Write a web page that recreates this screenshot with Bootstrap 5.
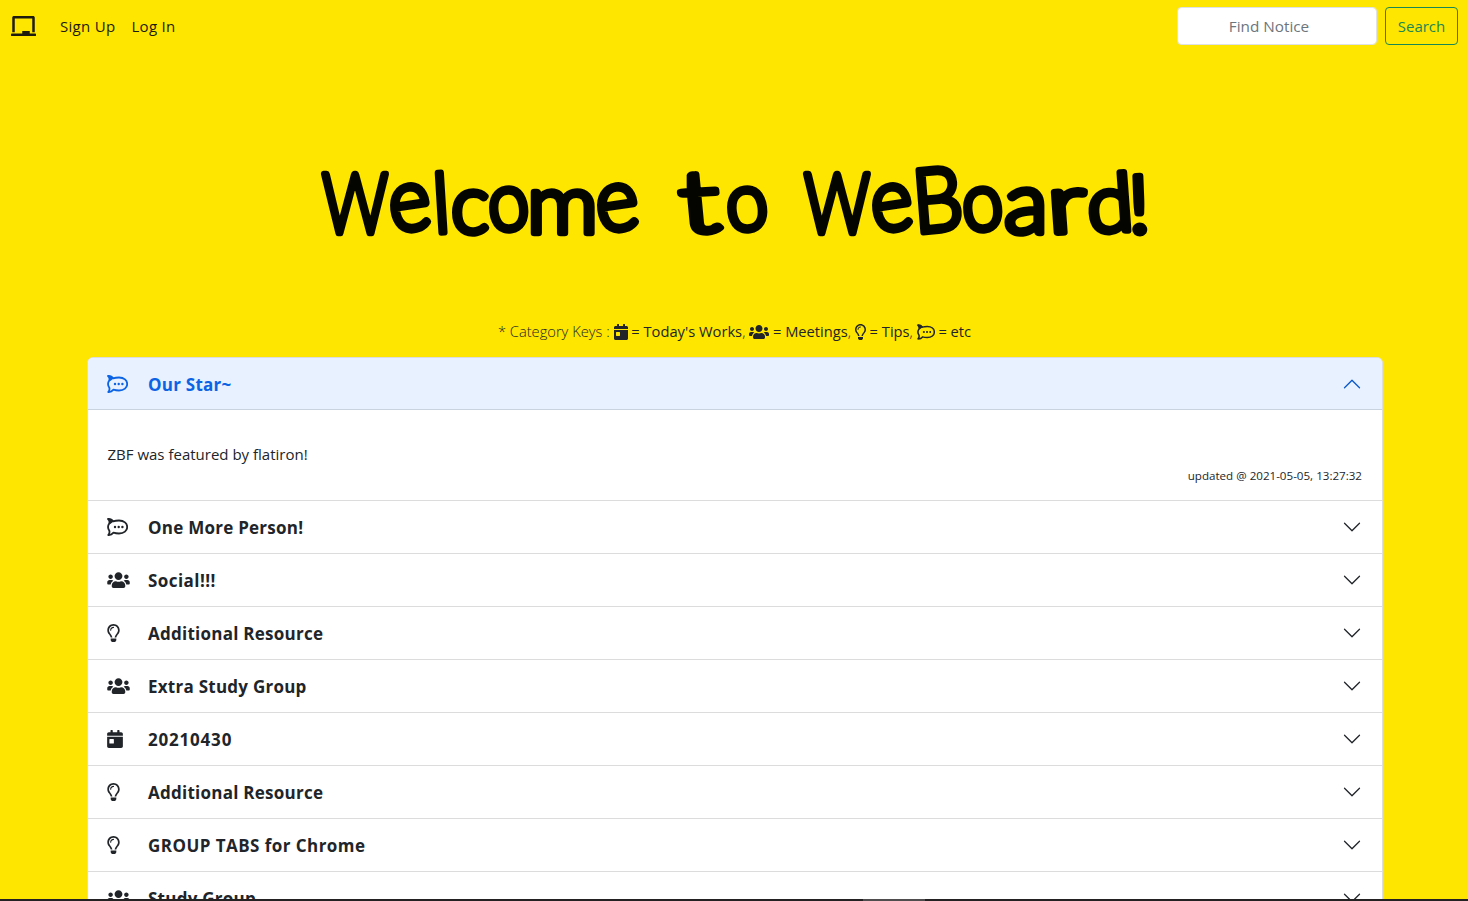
<!DOCTYPE html>
<html lang="en">
<head>
<meta charset="utf-8">
<meta name="viewport" content="width=device-width, initial-scale=1">
<title>WeBoard</title>
<link href="https://cdn.jsdelivr.net/npm/bootstrap@5.3.0/dist/css/bootstrap.min.css" rel="stylesheet">
<style>
html, body { height: 901px; overflow: hidden; }
body { background: #ffe600; font-family: "Open Sans", "Noto Sans", sans-serif; font-size: 15px; color: #212529; }
.topbar { height: 52px; padding: 0 10px 0 11px; }
.topbar a { color: #1c1b0e; text-decoration: none; }
.topbar .menu-link { font-size: 15px; letter-spacing: .300px; margin-left: 16px; }
.topbar .menu-link:nth-child(2) { margin-left: 24px; }
.topbar .form-control { width: 200px; height: 38px; font-size: 15.300px; border-radius: 4px; padding: 6px 14px 6px 12px; }
.topbar .form-control::placeholder { color: #6c757d; }
.topbar .btn { width: 73px; height: 38px; font-size: 15px; padding: 0; border-radius: 4px; }
.hero { height: 268px; }
.hero text { font-family: Lato, "Open Sans", sans-serif; font-weight: 300; font-size: 82px; fill: #050500; stroke: #050500; stroke-width: 6.500px; stroke-linejoin: round; stroke-linecap: round; }
.legend-line { height: 24px; padding-left: 1px; font-size: 14.700px; font-weight: 300; white-space: nowrap; line-height: 22px; }
.legend-line span { white-space: pre; margin-top: -2px; }
.legend-line svg { margin-top: -1px; }
.legend-line b { font-weight: 400; }
.board { width: 1296px; margin: 13px 0 0 87px; }
.board .accordion-item { border-color: #dcdcdd; }
.board .accordion-button { height: 52px; padding: 2px 20px 0; font-size: 17px; font-weight: 700; letter-spacing: .250px; color: #212529; background-color: #fff; }
.board .accordion-button.loose { letter-spacing: .450px; }
.board .accordion-button.looser { letter-spacing: .800px; }
.board .accordion-button::after { margin-top: -2px; }
.board .accordion-button:not(.collapsed) { color: #0c63e4; background-color: #e7f1ff; box-shadow: inset 0 -1px 0 #c9d3e0; }
.board .mark-slot { width: 41px; display: flex; margin: -3px 0 0 -1px; }
.board .accordion-body { height: 90px; padding: 33px 20px 0 19.500px; }
.stamp { font-size: 11.600px; line-height: 19px; }
.taskbar { height: 2px; background: #242122; z-index: 5; }
.taskbar div { width: 62px; height: 2px; margin-left: 863px; background: #504d4e; }
svg { display: block; }
</style>
</head>
<body>
<svg width="0" height="0" class="position-absolute">
  <symbol id="board" viewBox="0 0 640 512"><path d="M96 64h448v352h64V40c0-22.060-17.940-40-40-40H72C49.940 0 32 17.940 32 40v376h64V64zm528 384H480v-64H288v64H16c-8.840 0-16 7.160-16 16v32c0 8.840 7.160 16 16 16h608c8.840 0 16-7.160 16-16v-32c0-8.840-7.160-16-16-16z"/></symbol>
  <symbol id="day" viewBox="0 0 448 512"><path d="M0 464c0 26.500 21.500 48 48 48h352c26.500 0 48-21.500 48-48V192H0v272zm64-192c0-8.800 7.200-16 16-16h96c8.800 0 16 7.200 16 16v96c0 8.800-7.200 16-16 16H80c-8.800 0-16-7.200-16-16v-96zM400 64h-48V16c0-8.800-7.200-16-16-16h-32c-8.800 0-16 7.200-16 16v48H160V16c0-8.800-7.200-16-16-16h-32c-8.800 0-16 7.200-16 16v48H48C21.500 64 0 85.500 0 112v48h448v-48c0-26.500-21.500-48-48-48z"/></symbol>
  <symbol id="users" viewBox="0 0 640 512"><path d="M96 224c35.300 0 64-28.700 64-64s-28.700-64-64-64-64 28.700-64 64 28.700 64 64 64zm448 0c35.300 0 64-28.700 64-64s-28.700-64-64-64-64 28.700-64 64 28.700 64 64 64zm32 32h-64c-17.600 0-33.500 7.100-45.100 18.600 40.300 22.100 68.900 62 75.100 109.400h66c17.700 0 32-14.300 32-32v-32c0-35.300-28.700-64-64-64zm-256 0c61.900 0 112-50.100 112-112S381.900 32 320 32 208 82.100 208 144s50.100 112 112 112zm76.800 32h-8.300c-20.800 10-43.900 16-68.500 16s-47.600-6-68.500-16h-8.300C179.600 288 128 339.600 128 403.200V432c0 26.500 21.500 48 48 48h288c26.500 0 48-21.500 48-48v-28.800c0-63.600-51.600-115.200-115.200-115.200zm-223.700-13.400C161.500 263.100 145.600 256 128 256H64c-35.300 0-64 28.700-64 64v32c0 17.700 14.300 32 32 32h65.900c6.300-47.400 34.900-87.300 75.200-109.400z"/></symbol>
  <symbol id="bulb" viewBox="0 0 352 512"><path d="M176 80c-52.940 0-96 43.060-96 96 0 8.840 7.160 16 16 16s16-7.160 16-16c0-35.300 28.720-64 64-64 8.840 0 16-7.160 16-16s-7.160-16-16-16zM96.060 459.170c0 3.150.93 6.220 2.680 8.840l24.510 36.840c2.970 4.460 7.970 7.140 13.320 7.140h78.850c5.360 0 10.360-2.680 13.320-7.140l24.510-36.840c1.740-2.620 2.670-5.700 2.680-8.840l.05-43.180H96.020l.04 43.180zM176 0C73.720 0 0 82.970 0 176c0 44.370 16.450 84.850 43.560 115.780 16.640 18.990 42.740 58.800 52.420 92.160v.06h48v-.12c-.01-4.770-.72-9.510-2.150-14.070-5.590-17.810-22.820-64.770-62.170-109.670-20.540-23.430-31.520-53.150-31.610-84.140-.2-73.640 59.670-128 127.950-128 70.580 0 128 57.420 128 128 0 30.970-11.240 60.850-31.650 84.140-39.110 44.610-56.420 91.470-62.100 109.460a47.507 47.507 0 0 0-2.220 14.300v.1h48v-.05c9.680-33.370 35.780-73.180 52.420-92.160C335.550 260.850 352 220.370 352 176 352 78.800 273.200 0 176 0z"/></symbol>
  <symbol id="chat" viewBox="0 0 21 18"><path d="M1 1C3 .8 5 1.600 6.200 3.300 8 2.700 10 2.500 12 2.500c5 0 8.200 2.800 8.200 6.500s-3.200 6.500-8.200 6.500c-2 0-4-.3-5.500-.8C5 16.500 3 17.200 1.200 17c1.400-1.500 1.600-3 1-4.600C.9 10.500.9 7.500 2.200 5.600 2.800 4 2.400 2.200 1 1z" fill="none" stroke="currentColor" stroke-width="1.800" stroke-linejoin="round"/><path d="M.4.3C3 .1 5.500 1.200 7 3.200L2.600 6.400C3 4 1.800 2 .4.300z"/><circle cx="8" cy="9" r="1.200"/><circle cx="11.700" cy="9" r="1.200"/><circle cx="15.400" cy="9" r="1.200"/></symbol>
</svg>

<nav class="topbar d-flex align-items-center">
  <a href="#" aria-label="Home"><svg width="25" height="20" fill="currentColor"><use href="#board"/></svg></a>
  <a href="#" class="menu-link">Sign Up</a>
  <a href="#" class="menu-link">Log In</a>
  <form class="d-flex gap-2 ms-auto">
    <input class="form-control text-center" type="search" placeholder="Find Notice">
    <button class="btn btn-outline-success" type="button">Search</button>
  </form>
</nav>

<main>
  <h1 class="hero m-0">
    <svg width="1468" height="268" viewBox="0 52 1468 268">
      <text y="233"><tspan x="322" textLength="66" lengthAdjust="spacingAndGlyphs">W</tspan><tspan x="392" textLength="42" lengthAdjust="spacingAndGlyphs" rotate="-8" font-size="88">e</tspan><tspan x="435" textLength="16" lengthAdjust="spacingAndGlyphs" rotate="-4">l</tspan><tspan x="451" textLength="38" lengthAdjust="spacingAndGlyphs">c</tspan><tspan x="491" textLength="41" lengthAdjust="spacingAndGlyphs" rotate="-8">o</tspan><tspan x="527" textLength="71" lengthAdjust="spacingAndGlyphs">m</tspan><tspan x="599" textLength="43" lengthAdjust="spacingAndGlyphs" rotate="-8" font-size="88">e</tspan></text>
      <text y="233"><tspan x="682" textLength="40" lengthAdjust="spacingAndGlyphs" rotate="-4" font-size="86">t</tspan><tspan x="729" textLength="42" lengthAdjust="spacingAndGlyphs" rotate="-8">o</tspan></text>
      <text y="233"><tspan x="804" textLength="66" lengthAdjust="spacingAndGlyphs">W</tspan><tspan x="874" textLength="42" lengthAdjust="spacingAndGlyphs" rotate="-8" font-size="88">e</tspan><tspan x="915" textLength="50" lengthAdjust="spacingAndGlyphs" rotate="-5" font-size="88">B</tspan><tspan x="965" textLength="41" lengthAdjust="spacingAndGlyphs" rotate="-8">o</tspan><tspan x="1004" textLength="44" lengthAdjust="spacingAndGlyphs" font-size="86">a</tspan><tspan x="1049" textLength="39" lengthAdjust="spacingAndGlyphs" rotate="-3">r</tspan><tspan x="1089" textLength="46" lengthAdjust="spacingAndGlyphs" rotate="-4" font-size="80">d</tspan><tspan x="1129" textLength="22" lengthAdjust="spacingAndGlyphs" rotate="-2" font-size="80">!</tspan></text>
    </svg>
  </h1>

  <div class="legend-line d-flex justify-content-center align-items-center">
    <span>* Category Keys : </span><svg width="14" height="16" fill="currentColor"><use href="#day"/></svg><span><b> = Today's Works</b>, </span><svg width="20" height="16" fill="currentColor"><use href="#users"/></svg><span><b> = Meetings</b>, </span><svg width="11" height="16" fill="currentColor"><use href="#bulb"/></svg><span><b> = Tips</b>, </span><svg width="18" height="16" fill="currentColor"><use href="#chat"/></svg><span><b> = etc</b></span>
  </div>

  <div class="accordion board">
    <div class="accordion-item">
      <button class="accordion-button" type="button"><span class="mark-slot"><svg width="21" height="18" fill="currentColor"><use href="#chat"/></svg></span>Our Star~</button>
      <div class="accordion-body">
        <div>ZBF was featured by flatiron!</div>
        <div class="stamp text-end">updated @ 2021-05-05, 13:27:32</div>
      </div>
    </div>
    <div class="accordion-item"><button class="accordion-button collapsed" type="button"><span class="mark-slot"><svg width="21" height="18" fill="currentColor"><use href="#chat"/></svg></span>One More Person!</button></div>
    <div class="accordion-item"><button class="accordion-button collapsed loose" type="button"><span class="mark-slot"><svg width="23" height="18" fill="currentColor"><use href="#users"/></svg></span>Social!!!</button></div>
    <div class="accordion-item"><button class="accordion-button collapsed" type="button"><span class="mark-slot"><svg width="13" height="18" fill="currentColor"><use href="#bulb"/></svg></span>Additional Resource</button></div>
    <div class="accordion-item"><button class="accordion-button collapsed" type="button"><span class="mark-slot"><svg width="23" height="18" fill="currentColor"><use href="#users"/></svg></span>Extra Study Group</button></div>
    <div class="accordion-item"><button class="accordion-button collapsed looser" type="button"><span class="mark-slot"><svg width="16" height="18" fill="currentColor"><use href="#day"/></svg></span>20210430</button></div>
    <div class="accordion-item"><button class="accordion-button collapsed" type="button"><span class="mark-slot"><svg width="13" height="18" fill="currentColor"><use href="#bulb"/></svg></span>Additional Resource</button></div>
    <div class="accordion-item"><button class="accordion-button collapsed loose" type="button"><span class="mark-slot"><svg width="13" height="18" fill="currentColor"><use href="#bulb"/></svg></span>GROUP TABS for Chrome</button></div>
    <div class="accordion-item"><button class="accordion-button collapsed" type="button"><span class="mark-slot"><svg width="23" height="18" fill="currentColor"><use href="#users"/></svg></span>Study Group</button></div>
  </div>
</main>
<div class="taskbar fixed-bottom"><div></div></div>
<script src="https://cdn.jsdelivr.net/npm/bootstrap@5.3.0/dist/js/bootstrap.bundle.min.js"></script>
</body>
</html>
